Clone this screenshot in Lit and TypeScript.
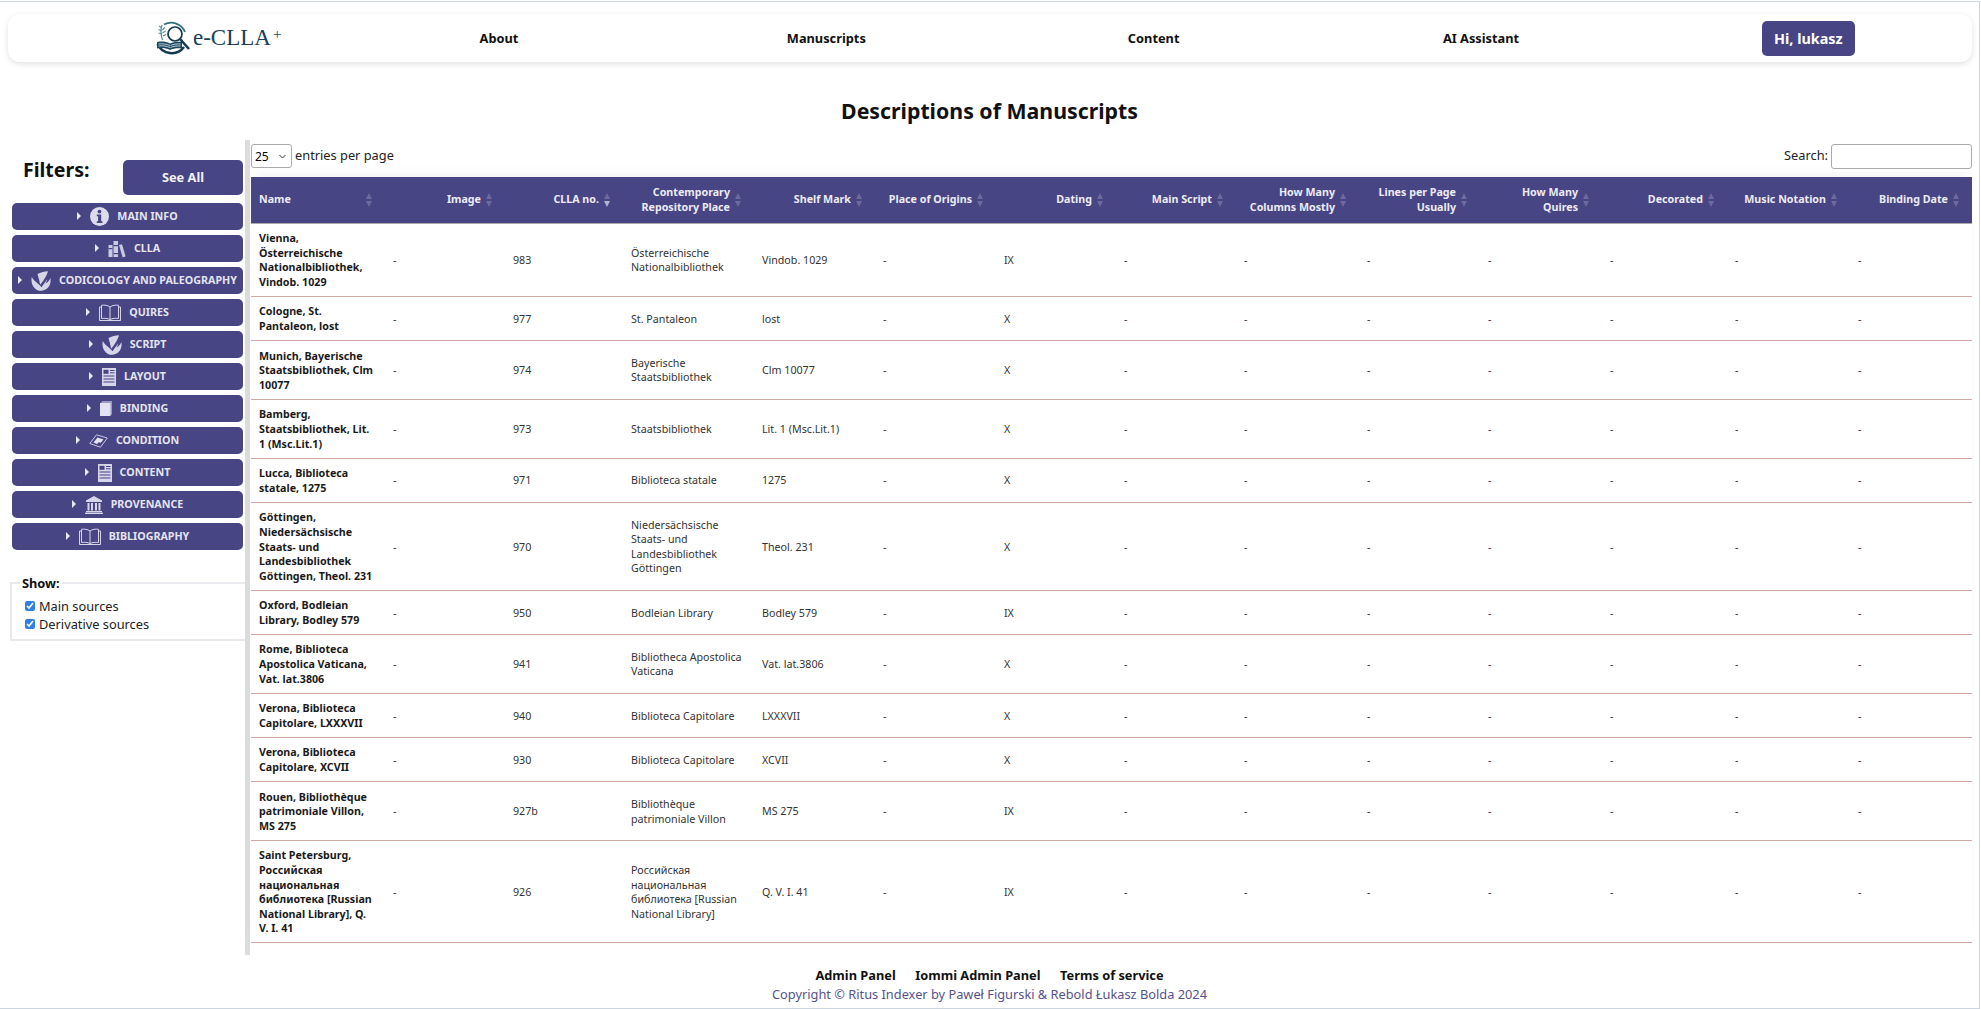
import { LitElement, html, css, svg } from "lit";
import { customElement } from "lit/decorators.js";

const icons: Record<string, unknown> = {
  info: svg`<svg class="ic" width="19" height="19" viewBox="0 0 19 19"><circle cx="9.5" cy="9.5" r="9.5" fill="#dcdcec"/><circle cx="9.5" cy="4.6" r="1.9" fill="#484585"/><path d="M6.8 7.6h4.4v6.6h1.3v1.7H6.8v-1.7h1.3V9.3H6.8z" fill="#484585"/></svg>`,
  books: svg`<svg class="ic" width="18" height="18" viewBox="0 0 18 18" fill="#c9c9e2"><rect x="0.5" y="5" width="4" height="12"/><rect x="5.5" y="1" width="4.5" height="16"/><path d="M11 5l3-.8 3.6 12.2-3 .9z"/><rect x="0.5" y="8" width="4" height="1.2" fill="#484585"/><rect x="5.5" y="5" width="4.5" height="1.2" fill="#484585"/><rect x="5.5" y="13" width="4.5" height="1.2" fill="#484585"/></svg>`,
  nib: svg`<svg class="ic" width="20" height="20" viewBox="0 0 20 20" fill="#d6d6e8"><path d="M.8 6C-.8 13 3.500 19.800 10 19.800s10.800-6.300 9.300-12.800c-.8 2.500-2.500 4.500-4.800 5.500.9-1.800 1.500-3 1.800-4.300-2 2.500-4 5.300-5.800 8C8 12.500 3.500 11 .8 6z"/><path d="M6.500 3C9.500 1.500 13.500.5 17 .3c-1 3.500-3.500 8.500-7.800 13.400C8.500 10 7.500 6.500 6.500 3z"/></svg>`,
  book: svg`<svg class="ic" width="22" height="17" viewBox="0 0 22 17" fill="none" stroke="#d6d6e8" stroke-width="1"><path d="M11 3C8.500 1.200 5.500.8 2.500 1.300V14.500c3-.5 6-.2 8.500 1 2.500-1.200 5.500-1.500 8.500-1V1.300C16.500.8 13.500 1.200 11 3zM11 3v12.500"/><path d="M2.500 3H.5v13.500h21V3h-2"/></svg>`,
  doc: svg`<svg class="ic" width="14" height="18" viewBox="0 0 14 18"><rect width="14" height="18" fill="#d6d6e8"/><rect x="1.500" y="1.800" width="5" height="4" fill="#484585"/><path d="M8 2.500h4.500M8 4.800h4.500M1.500 8h11M1.500 11h11M1.500 14h11" stroke="#484585" stroke-width="1"/></svg>`,
  binding: svg`<svg class="ic" width="12" height="15" viewBox="0 0 12 15"><path d="M1 1.500 2.500 0H12v13l-1 1.500z" fill="#9a99c4"/><rect y="2" width="10.500" height="13" fill="#e2e2f0"/></svg>`,
  condition: svg`<svg class="ic" width="19" height="14" viewBox="0 0 19 14" fill="none" stroke="#d6d6e8"><path d="M7.500.8 18.300 4 11.500 13.200.8 9.500z" stroke-width=".9"/><path d="M4.500 8.500 8.500 3.500l6 2-3 3.500-1.500-1-2 2z" fill="#e2e2f0" stroke="none"/></svg>`,
  museum: svg`<svg class="ic" width="18" height="18" viewBox="0 0 18 18" fill="#d6d6e8"><path d="M9 0 17 4.500V6H1V4.500z"/><path d="M2.500 7h2v7.500h-2zM6 7h2v7.500H6zM10 7h2v7.500h-2zM13.500 7h2v7.500h-2z"/><rect x="1" y="15" width="16" height="1.300"/><rect y="16.700" width="18" height="1.300"/></svg>`,
};

const filters = [
  ["MAIN INFO", "info"],
  ["CLLA", "books"],
  ["CODICOLOGY AND PALEOGRAPHY", "nib"],
  ["QUIRES", "book"],
  ["SCRIPT", "nib"],
  ["LAYOUT", "doc"],
  ["BINDING", "binding"],
  ["CONDITION", "condition"],
  ["CONTENT", "doc"],
  ["PROVENANCE", "museum"],
  ["BIBLIOGRAPHY", "book"],
];

const columns: [string, number][] = [
  ["Name", 134],
  ["Image", 120],
  ["CLLA no.", 118],
  ["Contemporary Repository Place", 131],
  ["Shelf Mark", 121],
  ["Place of Origins", 121],
  ["Dating", 120],
  ["Main Script", 120],
  ["How Many Columns Mostly", 123],
  ["Lines per Page Usually", 121],
  ["How Many Quires", 122],
  ["Decorated", 125],
  ["Music Notation", 123],
  ["Binding Date", 122],
];

const rows = [
  ["Vienna, Österreichische Nationalbibliothek, Vindob. 1029", "983", "Österreichische Nationalbibliothek", "Vindob. 1029", "IX"],
  ["Cologne, St. Pantaleon, lost", "977", "St. Pantaleon", "lost", "X"],
  ["Munich, Bayerische Staatsbibliothek, Clm 10077", "974", "Bayerische Staatsbibliothek", "Clm 10077", "X"],
  ["Bamberg, Staatsbibliothek, Lit. 1 (Msc.Lit.1)", "973", "Staatsbibliothek", "Lit. 1 (Msc.Lit.1)", "X"],
  ["Lucca, Biblioteca statale, 1275", "971", "Biblioteca statale", "1275", "X"],
  ["Göttingen, Niedersächsische Staats- und Landesbibliothek Göttingen, Theol. 231", "970", "Niedersächsische Staats- und Landesbibliothek Göttingen", "Theol. 231", "X"],
  ["Oxford, Bodleian Library, Bodley 579", "950", "Bodleian Library", "Bodley 579", "IX"],
  ["Rome, Biblioteca Apostolica Vaticana, Vat. lat.3806", "941", "Bibliotheca Apostolica Vaticana", "Vat. lat.3806", "X"],
  ["Verona, Biblioteca Capitolare, LXXXVII", "940", "Biblioteca Capitolare", "LXXXVII", "X"],
  ["Verona, Biblioteca Capitolare, XCVII", "930", "Biblioteca Capitolare", "XCVII", "X"],
  ["Rouen, Bibliothèque patrimoniale Villon, MS 275", "927b", "Bibliothèque patrimoniale Villon", "MS 275", "IX"],
  ["Saint Petersburg, Российская национальная библиотека [Russian National Library], Q. V. I. 41", "926", "Российская национальная библиотека [Russian National Library]", "Q. V. I. 41", "IX"],
];

@customElement("app-root")
export class AppRoot extends LitElement {
  static styles = css`
    :host {
      display: block;
      font-family: "Noto Sans", sans-serif;
      color: #111;
    }
    .page {
      margin: 1px 1px 0 0;
      height: 1008px;
      box-sizing: border-box;
      border: 1px solid #cbd5e0;
      border-left: none;
      display: flex;
      flex-direction: column;
      overflow: hidden;
    }
    nav {
      margin: 12px 7px 0 8px;
      height: 48px;
      display: grid;
      grid-template-columns: repeat(6, 1fr);
      align-items: center;
      justify-items: center;
      border-radius: 12px;
      box-shadow: 0 2px 6px rgba(0, 0, 0, 0.12);
      font-size: 12.8px;
      font-weight: 700;
    }
    .logo {
      justify-self: start;
      margin-left: 147px;
      display: flex;
      align-items: center;
      gap: 2px;
      font-family: "Liberation Serif", serif;
      font-size: 23px;
      font-weight: 400;
      color: #1b3f5a;
    }
    .logo sup {
      font-size: 15px;
      line-height: 0;
      vertical-align: 6px;
      margin-left: 2px;
    }
    .hi {
      height: 35px;
      width: 93px;
      border-radius: 5px;
      background: #484585;
      color: #fff;
      font-size: 14.4px;
      display: flex;
      align-items: center;
      justify-content: center;
    }
    h1 {
      margin: 34px 0 14px;
      font-size: 21.3px;
      line-height: 30px;
      text-align: center;
      color: #111;
    }
    .main {
      flex: 1;
      display: grid;
      grid-template-columns: 250px 1fr;
      column-gap: 1px;
      padding-right: 7px;
      min-height: 0;
    }
    aside {
      height: 815px;
      box-sizing: border-box;
      border-right: 5px solid #dcdcdc;
      padding: 20px 2px 0 12px;
      overflow: hidden;
    }
    .head {
      display: flex;
      justify-content: space-between;
      height: 35px;
      margin-bottom: 8px;
    }
    .head b {
      font-size: 19.5px;
      line-height: 22px;
      margin: -1px 0 0 11px;
    }
    .see {
      width: 120px;
      box-sizing: border-box;
      padding-bottom: 2px;
      border-radius: 5px;
      background: #484585;
      color: #f0f0f7;
      font-size: 12.8px;
      font-weight: 700;
      display: flex;
      align-items: center;
      justify-content: center;
    }
    .filters {
      display: flex;
      flex-direction: column;
      gap: 5px;
    }
    .filter {
      height: 27px;
      box-sizing: border-box;
      border-radius: 5px;
      background: #484585;
      color: #e4e4f0;
      font-size: 10.7px;
      font-weight: 700;
      display: flex;
      align-items: center;
      justify-content: center;
      gap: 8px;
    }
    .filter span:last-child {
      margin-top: -2px;
    }
    .caret {
      width: 0;
      height: 0;
      border-left: 4px solid #e8e8f2;
      border-top: 4px solid transparent;
      border-bottom: 4px solid transparent;
      margin: -2px 1px 0 0;
    }
    .ic {
      flex: none;
    }
    fieldset {
      margin: 26px -4px 0 -2px;
      padding: 0 0 6px 13px;
      border: 2px solid #e8e8ee;
      border-right: none;
      font-size: 12.8px;
    }
    legend {
      padding: 0 2px;
      margin: -1px 0 1px -5px;
      font-size: 12.8px;
      font-weight: 700;
      line-height: 14px;
    }
    label {
      display: flex;
      align-items: center;
      gap: 4px;
      line-height: 18px;
      color: #222;
    }
    label:first-of-type {
      margin-top: 6px;
    }
    input[type="checkbox"] {
      margin: 0;
      width: 10px;
      height: 10px;
      accent-color: #2f80e4;
    }
    .bar {
      height: 37px;
      padding-top: 4px;
      box-sizing: border-box;
      display: flex;
      justify-content: space-between;
      align-items: flex-start;
      font-size: 12.8px;
      color: #222;
    }
    .bar .side {
      display: flex;
      align-items: center;
      gap: 3px;
      height: 24px;
    }
    .bar .side span {
      margin-top: -2px;
    }
    select {
      appearance: none;
      width: 41px;
      height: 24px;
      font: 12px "Noto Sans", sans-serif;
      border: 1px solid #aaa;
      border-radius: 3px;
      padding: 0 0 0 3px;
      background: #fff url("data:image/svg+xml,%3Csvg xmlns='http://www.w3.org/2000/svg' width='7' height='5'%3E%3Cpath d='M.5 1l3 3 3-3' fill='none' stroke='%23333'/%3E%3C/svg%3E") no-repeat right 5px center;
    }
    .search {
      width: 141px;
      height: 25px;
      box-sizing: border-box;
      border: 1px solid #aaa;
      border-radius: 3px;
    }
    .tablewrap {
      box-shadow: 0 -7px 12px -6px rgba(0, 0, 0, 0.08);
    }
    table {
      width: 1721px;
      table-layout: fixed;
      border-collapse: collapse;
      font-size: 10.7px;
      line-height: 14.6px;
      color: #333;
    }
    th {
      position: relative;
      height: 46px;
      box-sizing: border-box;
      padding: 0 24px 0 8px;
      background: #484585;
      border-bottom: 1px solid #aaa;
      color: #ecebf5;
      font-weight: 700;
      text-align: right;
      vertical-align: middle;
    }
    th.left {
      text-align: left;
    }
    .sort {
      position: absolute;
      right: 13px;
      top: 16px;
      display: flex;
      flex-direction: column;
      gap: 2px;
    }
    .sort i {
      width: 0;
      height: 0;
      border-left: 3.5px solid transparent;
      border-right: 3.5px solid transparent;
    }
    .sort .up {
      border-bottom: 6px solid rgba(255, 255, 255, 0.2);
    }
    .sort .down {
      border-top: 6px solid rgba(255, 255, 255, 0.2);
    }
    .sort .on {
      border-top-color: rgba(255, 255, 255, 0.6);
    }
    td {
      padding: 7.5px 8px 6.5px;
      border-bottom: 1px solid #d0a9a5;
      vertical-align: middle;
    }
    td.name {
      font-weight: 700;
      color: #1a1a1a;
    }
    footer {
      padding-bottom: 4px;
      text-align: center;
      font-size: 12.8px;
      line-height: 19px;
    }
    .links {
      display: flex;
      justify-content: center;
      gap: 19.5px;
      font-weight: 700;
      color: #111;
    }
    .copy {
      color: #55528f;
    }
  `;

  render() {
    return html`
      <div class="page">
        <nav>
          <div class="logo">
            <svg width="36" height="34" viewBox="0 0 36 34" fill="none">
              <path d="M9 3.500A15 15 0 0 1 30 11" stroke="#2f6f7a" stroke-width="1.800"/>
              <path d="M2.500 23A15.500 15.500 0 0 0 29 26" stroke="#17394f" stroke-width="2.500"/>
              <path d="M7 4c-1.500 4-1.500 9 .5 15" stroke="#4d8b95" stroke-width="1.200"/>
              <path d="M7 7 4 5M6.800 10 3.500 8.500M7 13 3.500 12M7.200 9 10 6.500M7.500 12 10.500 10M8 15l3-1.500" stroke="#5b97a0" stroke-width="1.300"/>
              <path d="M2 21c4.500-1 9-.5 13 1.500 3.500-1.700 7.500-2.300 12-1.500v6.500c-4.500-.8-8.500-.2-12 1.500-4-2-8.500-2.500-13-1.500z" fill="#1d4a63"/>
              <path d="M3.500 23c4-.5 8 0 11.500 1.500M3.500 25c4-.5 8 0 11.500 1.500M15.500 24.500c3-1.300 6.500-1.800 10-1.500M15.500 26.500c3-1.300 6.500-1.800 10-1.500" stroke="#fff" stroke-width=".7"/>
              <circle cx="20" cy="13" r="7" stroke="#17394f" stroke-width="1.700" fill="#fff"/>
              <path d="M25 18 34 28" stroke="#17394f" stroke-width="2.600"/>
            </svg>
            <span>e-CLLA<sup>+</sup></span>
          </div>
          <span>About</span>
          <span>Manuscripts</span>
          <span>Content</span>
          <span>AI Assistant</span>
          <div class="hi">Hi, lukasz</div>
        </nav>
        <h1>Descriptions of Manuscripts</h1>
        <div class="main">
          <aside>
            <div class="head">
              <b>Filters:</b>
              <div class="see">See All</div>
            </div>
            <div class="filters">
              ${filters.map(
                ([label, icon]) => html`
                  <div class="filter">
                    <span class="caret"></span>${icons[icon]}<span>${label}</span>
                  </div>
                `
              )}
            </div>
            <fieldset>
              <legend>Show:</legend>
              <label><input type="checkbox" checked />Main sources</label>
              <label><input type="checkbox" checked />Derivative sources</label>
            </fieldset>
          </aside>
          <section>
            <div class="bar">
              <div class="side">
                <select><option>25</option></select>
                <span>entries per page</span>
              </div>
              <div class="side">
                <span>Search:</span>
                <input class="search" />
              </div>
            </div>
            <div class="tablewrap">
              <table>
                <colgroup>
                  ${columns.map(([, w]) => html`<col style="width:${w}px" />`)}
                </colgroup>
                <thead>
                  <tr>
                    ${columns.map(
                      ([title], i) => html`
                        <th class=${i === 0 ? "left" : ""}>
                          ${title}
                          <span class="sort">
                            <i class="up"></i><i class="down ${i === 2 ? "on" : ""}"></i>
                          </span>
                        </th>
                      `
                    )}
                  </tr>
                </thead>
                <tbody>
                  ${rows.map(
                    ([name, no, repo, shelf, dating]) => html`
                      <tr>
                        <td class="name">${name}</td>
                        <td>-</td>
                        <td>${no}</td>
                        <td>${repo}</td>
                        <td>${shelf}</td>
                        <td>-</td>
                        <td>${dating}</td>
                        ${[0, 1, 2, 3, 4, 5, 6].map(() => html`<td>-</td>`)}
                      </tr>
                    `
                  )}
                </tbody>
              </table>
            </div>
          </section>
        </div>
        <footer>
          <div class="links">
            <span>Admin Panel</span><span>Iommi Admin Panel</span><span>Terms of service</span>
          </div>
          <div class="copy">Copyright © Ritus Indexer by Paweł Figurski & Rebold Łukasz Bolda 2024</div>
        </footer>
      </div>
    `;
  }
}
